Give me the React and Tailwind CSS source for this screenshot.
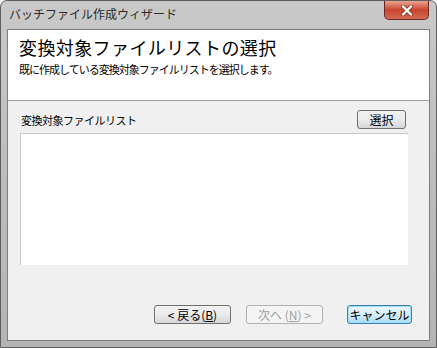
export default function App() {
  const font = { fontFamily: '"Noto Sans CJK JP", "Noto Sans", sans-serif' };
  return (
    <div className="w-[437px] h-[348px] bg-[#f0f0f0]" style={font}>
      <div className="w-[437px] h-[348px] flex flex-col rounded-t-[7px] border border-[#5f5f5f] bg-gradient-to-b from-[#c9c9c9] via-[#bdbdbd] to-[#b4b4b4] px-[6px] pb-[6px]">
        {/* title bar */}
        <div className="h-[28px] flex items-start justify-between">
          <span className="pl-[2px] pt-[5px] text-[12px] leading-[16px] text-[#2a2a2a]">
            バッチファイル作成ウィザード
          </span>
          <div className="mr-[1px] w-[45px] h-[19px] rounded-b-[5px] border border-t-0 border-[#6a2a22] bg-gradient-to-b from-[#e8a390] via-[#c8442c] to-[#d36b52] flex items-center justify-center">
            <svg width="14" height="11" viewBox="0 0 14 11">
              <path d="M3 1.5 L11 9.5 M11 1.5 L3 9.5" stroke="#5a1a10" strokeWidth="4" strokeLinecap="round" opacity="0.5" />
              <path d="M3 1.5 L11 9.5 M11 1.5 L3 9.5" stroke="#ffffff" strokeWidth="2.4" strokeLinecap="round" />
            </svg>
          </div>
        </div>

        {/* client area */}
        <div className="flex-1 flex flex-col border border-[#7d7d7d] bg-[#f0f0f0]">
          <div className="h-[71px] bg-white border-b border-[#a0a0a0] pl-[11px] pt-[5px]">
            <div className="text-[18px] leading-[24px] text-black tracking-[0.4px]">変換対象ファイルリストの選択</div>
            <div className="text-[11px] leading-[14px] text-black mt-[3px] tracking-[-1px]">既に作成している変換対象ファイルリストを選択します。</div>
          </div>

          <div className="flex-1 flex flex-col px-[12px] pt-[9px]">
            <div className="flex items-end justify-between pr-[9px]">
              <span className="text-[11px] leading-[16px] text-black pl-[1px] pb-[1px] tracking-[-0.5px]">変換対象ファイルリスト</span>
              <button className="w-[49px] h-[19px] mr-[2px] rounded-[3px] border border-[#707070] bg-gradient-to-b from-[#f2f2f2] via-[#ebebeb] to-[#d6d6d6] text-[12px] leading-none text-black">
                選択
              </button>
            </div>
            <div className="mt-[4px] mr-[9px] h-[132px] bg-white border-t border-l border-[#c8c8c8]" />

            <div className="flex-1 flex items-end justify-end gap-[15px] pb-[16px] pr-[5px]">
              <button className="w-[77px] h-[19px] rounded-[3px] border border-[#707070] bg-gradient-to-b from-[#f2f2f2] via-[#ebebeb] to-[#d6d6d6] text-[12px] leading-none text-black">
                &lt; 戻る(<span className="underline">B</span>)
              </button>
              <button className="w-[77px] h-[19px] mr-[9px] rounded-[3px] border border-[#adb2b5] bg-[#f4f4f4] text-[12px] leading-none text-[#a0a0a0]">
                次へ (<span className="underline">N</span>) &gt;
              </button>
              <button className="w-[65px] h-[19px] rounded-[3px] border border-[#3c7fb1] bg-gradient-to-b from-[#eaf6fd] via-[#d9f0fc] to-[#a7d9f5] text-[12px] leading-none text-black shadow-[inset_0_0_0_1px_#9ee0fb]">
                キャンセル
              </button>
            </div>
          </div>
        </div>
      </div>
    </div>
  );
}
